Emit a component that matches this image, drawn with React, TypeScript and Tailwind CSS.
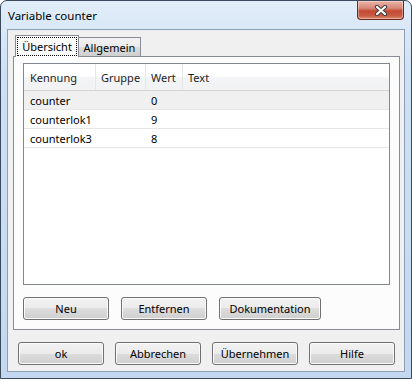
import React from 'react'

const rows = [
  { key: 'counter', group: '', value: '0', text: '', selected: true },
  { key: 'counterlok1', group: '', value: '9', text: '' },
  { key: 'counterlok3', group: '', value: '8', text: '' },
]

const Button = ({ label, width = 'w-[86px]' }: any) => (
  <button
    className={`${width} h-[23px] rounded-[3px] border border-[#707070] bg-[linear-gradient(180deg,#f2f2f2_0%,#ebebeb_50%,#dddddd_50%,#cfcfcf_100%)] shadow-[inset_0_0_0_1px_#fbfbfb] text-[11px] leading-[13px] text-black flex items-center justify-center`}
  >
    {label}
  </button>
)

export default function App() {
  return (
    <div className="w-[412px] h-[379px] overflow-hidden font-['Noto_Sans',sans-serif] text-[11px] leading-[13px] text-black">
      <div className="w-[412px] h-[379px] rounded-t-[7px] border border-[#3a4a5c] bg-[linear-gradient(180deg,#e1edf9_0%,#cde0f4_20%,#c3d8f0_100%)] px-[6px] flex flex-col">
        {/* title bar */}
        <div className="h-[28px] flex items-start shrink-0">
          <div className="pt-[7px] pl-[1px] text-[11.5px] leading-[15px]">Variable counter</div>
          <div className="ml-auto mr-[1px] w-[47px] h-[19px] rounded-b-[4px] border border-t-0 border-[#6b2a20] bg-[linear-gradient(180deg,#eab2a6_0%,#d88877_40%,#c34a33_55%,#c85a42_80%,#dc8a72_100%)] shadow-[inset_0_0_0_1px_rgba(255,255,255,0.35)] flex items-center justify-center">
            <svg width="14" height="11" viewBox="0 0 14 11">
              <path d="M3 2 L11 9 M11 2 L3 9" stroke="#3d3d3d" strokeWidth="4.2" strokeLinecap="round" />
              <path d="M3 2 L11 9 M11 2 L3 9" stroke="#ffffff" strokeWidth="2.2" strokeLinecap="round" />
            </svg>
          </div>
        </div>

        {/* client area */}
        <div className="w-[398px] h-[343px] border border-[#8c9fb4] bg-[#f0f0f0] flex flex-col">
          {/* tabs */}
          <div className="mt-[5px] ml-[7px] h-[21px] flex items-end relative z-10">
            <div className="w-[64px] h-[22px] -mb-px border border-b-0 border-[#898c95] bg-[#fcfcfc] p-[1px] pb-[1px]">
              <div className="h-[19px] border border-dotted border-black flex items-center justify-center">Übersicht</div>
            </div>
            <div className="w-[62px] h-[19px] border border-l-0 border-b-0 border-[#898c95] bg-[linear-gradient(180deg,#f2f2f2_0%,#ebebeb_50%,#dddddd_50%,#cfcfcf_100%)] flex items-center justify-center">
              Allgemein
            </div>
          </div>

          {/* tab panel */}
          <div className="ml-[5px] w-[387px] h-[274px] border border-[#898c95] bg-[#fcfcfc] pt-[6px] pl-[9px] flex flex-col">
            <div className="w-[367px] h-[222px] border border-[#828790] bg-white flex flex-col">
              <div className="h-[27px] flex border-b border-[#d5d5d5] bg-[linear-gradient(180deg,#ffffff_0%,#ffffff_45%,#f3f4f6_55%,#f1f2f4_100%)] text-[#1e1e1e]">
                <div className="w-[72px] pl-[6px] border-r border-[#e3e6ea] flex items-center">Kennung</div>
                <div className="w-[50px] pl-[5px] border-r border-[#e3e6ea] flex items-center">Gruppe</div>
                <div className="w-[37px] pl-[5px] border-r border-[#e3e6ea] flex items-center">Wert</div>
                <div className="pl-[5px] flex items-center">Text</div>
              </div>
              {rows.map((r) => (
                <div
                  key={r.key}
                  className={`h-[19px] flex border-b border-[#e6e6e6] ${r.selected ? 'bg-[#f0f0f0]' : 'bg-white'}`}
                >
                  <div className="w-[72px] pl-[6px] flex items-center">{r.key}</div>
                  <div className="w-[50px] pl-[5px] flex items-center">{r.group}</div>
                  <div className="w-[37px] pl-[5px] flex items-center">{r.value}</div>
                  <div className="pl-[5px] flex items-center">{r.text}</div>
                </div>
              ))}
            </div>
            <div className="mt-[12px] flex gap-[12px]">
              <Button label="Neu" />
              <Button label="Entfernen" />
              <Button label="Dokumentation" width="w-[102px]" />
            </div>
          </div>

          {/* dialog buttons */}
          <div className="mt-[12px] ml-[10px] flex gap-[11px]">
            <Button label="ok" />
            <Button label="Abbrechen" />
            <Button label="Übernehmen" />
            <Button label="Hilfe" />
          </div>
        </div>
      </div>
    </div>
  )
}
